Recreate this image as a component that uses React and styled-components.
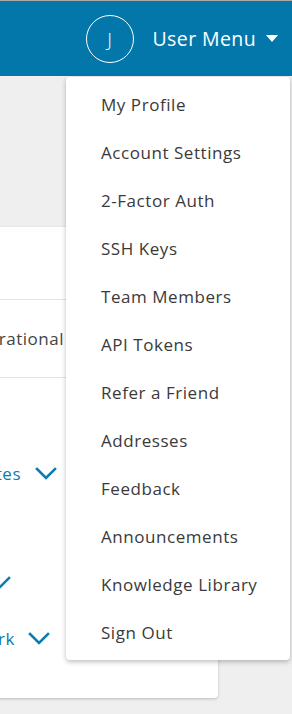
import React from "react";
import styled, { createGlobalStyle } from "styled-components";

const Global = createGlobalStyle`
  html, body { margin: 0; padding: 0; }
  body {
    background: #efefef;
    font-family: "Open Sans", "Noto Sans", sans-serif;
    overflow: hidden;
    width: 292px;
    height: 714px;
  }
`;

const Page = styled.div`
  position: relative;
  width: 292px;
  height: 714px;
  overflow: hidden;
`;

const Header = styled.header`
  height: 75px;
  border-top: 1px solid #a9a9a9;
  background: #0377aa;
  display: flex;
  align-items: center;
  justify-content: flex-end;
  padding-right: 14px;
  gap: 19px;
`;

const Avatar = styled.div`
  width: 46px;
  height: 46px;
  border: 1px solid #fff;
  border-radius: 50%;
  display: flex;
  align-items: center;
  justify-content: center;
  color: #fff;
  font-size: 19px;
  font-weight: 300;
  margin-top: 1px;
`;

const MenuToggle = styled.div`
  display: flex;
  align-items: center;
  gap: 10px;
  color: #fff;
  font-size: 19.5px;
  letter-spacing: 0.4px;
`;

const Caret = styled.span`
  width: 0;
  height: 0;
  border-left: 6px solid transparent;
  border-right: 6px solid transparent;
  border-top: 7px solid #fff;
`;

const Content = styled.main`
  padding-top: 151px;
`;

const Card = styled.section`
  margin-left: -200px;
  width: 418px;
  height: 471px;
  background: #fff;
  border-radius: 4px;
  box-shadow: 0 1px 3px rgba(0, 0, 0, 0.22);
  display: flex;
  flex-direction: column;
`;

const CardSection = styled.div`
  height: ${(p) => p.$h}px;
  border-bottom: 1px solid #e3e3e3;
  display: flex;
  align-items: center;
`;

const StatusText = styled.span`
  width: 264px;
  text-align: right;
  color: #444;
  font-size: 17px;
  letter-spacing: 0.5px;
`;

const Links = styled.div`
  padding-top: 83px;
  display: flex;
  flex-direction: column;
`;

const LinkRow = styled.div`
  width: ${(p) => 200 + p.$end}px;
  margin-top: ${(p) => p.$mt}px;
  height: 24px;
  display: flex;
  align-items: center;
  justify-content: flex-end;
  gap: ${(p) => p.$gap}px;
  color: #0c7bb0;
  font-size: 17px;
  letter-spacing: 0.5px;
`;

const Chevron = () => (
  <svg width="22" height="13" viewBox="0 0 22 13" fill="none">
    <polyline points="2,2 11,11 20,2" stroke="#0c7bb0" strokeWidth="2.6" strokeLinecap="square" />
  </svg>
);

const Dropdown = styled.nav`
  position: absolute;
  top: 77px;
  left: 66px;
  width: 224px;
  padding: 3px 0 4px;
  background: #fff;
  border-radius: 4px;
  box-shadow: 0 2px 5px rgba(0, 0, 0, 0.25);
  display: flex;
  flex-direction: column;
`;

const MenuItem = styled.a`
  height: 48px;
  display: flex;
  align-items: center;
  padding-left: 35px;
  color: #3a3a3a;
  font-size: 17px;
  letter-spacing: 0.55px;
  text-decoration: none;
`;

const items = [
  "My Profile",
  "Account Settings",
  "2-Factor Auth",
  "SSH Keys",
  "Team Members",
  "API Tokens",
  "Refer a Friend",
  "Addresses",
  "Feedback",
  "Announcements",
  "Knowledge Library",
  "Sign Out",
];

export default function App() {
  return (
    <Page>
      <Global />
      <Header>
        <Avatar>J</Avatar>
        <MenuToggle>
          User Menu
          <Caret />
        </MenuToggle>
      </Header>
      <Content>
        <Card>
          <CardSection $h={72} />
          <CardSection $h={77}>
            <StatusText>Operational</StatusText>
          </CardSection>
          <Links>
            <LinkRow $end={57} $mt={0} $gap={14}>
              Notify on updates <Chevron />
            </LinkRow>
            <LinkRow $end={11} $mt={85} $gap={0}>
              <Chevron />
            </LinkRow>
            <LinkRow $end={50} $mt={32} $gap={13}>
              Network <Chevron />
            </LinkRow>
          </Links>
        </Card>
      </Content>
      <Dropdown>
        {items.map((t) => (
          <MenuItem key={t} href="#">
            {t}
          </MenuItem>
        ))}
      </Dropdown>
    </Page>
  );
}
